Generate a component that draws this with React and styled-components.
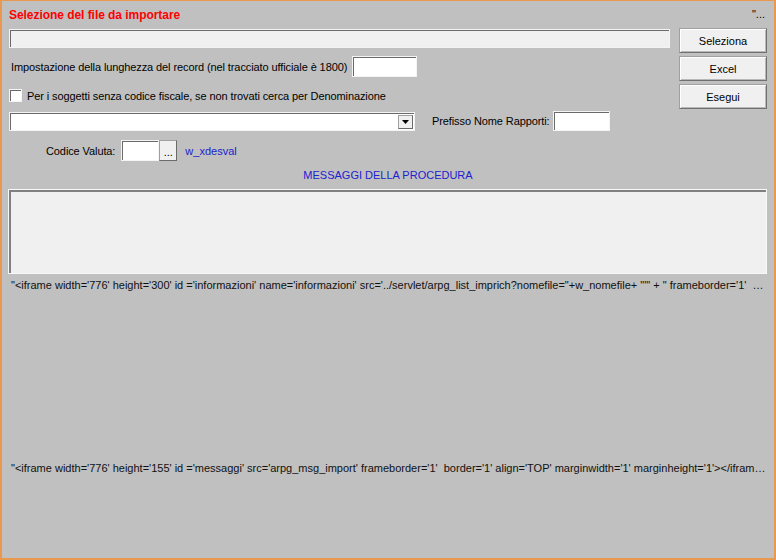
import styled, { createGlobalStyle } from 'styled-components';

const GlobalStyle = createGlobalStyle`
  html, body {
    margin: 0;
    padding: 0;
    background: #c0c0c0;
  }
  * {
    box-sizing: border-box;
  }
`

const Frame = styled.div`
  width: 776px;
  height: 560px;
  background: #c0c0c0;
  border: 2px solid #e8984f;
  border-top-width: 1px;
  padding: 0 7px 0 7px;
  display: flex;
  flex-direction: column;
  font-family: "Liberation Sans", Arial, sans-serif;
  font-size: 11px;
  color: #000;
  overflow: hidden;
`

const Header = styled.div`
  display: flex;
  justify-content: space-between;
  align-items: center;
  height: 28px;
  padding-top: 0;
`

const Title = styled.div`
  color: #ff0000;
  font-weight: bold;
  font-size: 12px;
  letter-spacing: -0.05px;
`

const Corner = styled.div`
  font-size: 11px;
  margin-right: 2px;
  margin-top: -3px;
`

const Top = styled.div`
  display: flex;
  gap: 9px;
`

const LeftCol = styled.div`
  flex: 1;
  display: flex;
  flex-direction: column;
`

const RightCol = styled.div`
  width: 88px;
  display: flex;
  flex-direction: column;
  gap: 3px;
  margin-top: -1px;
`

const Button = styled.button`
  height: 25px;
  width: 100%;
  background: #f0f0f0;
  border: 1px solid #707070;
  border-top-color: #a0a0a0;
  border-left-color: #a0a0a0;
  box-shadow: inset 1px 1px 0 #ffffff, inset -1px -1px 0 #b8b8b8;
  font-family: inherit;
  font-size: 11px;
  color: #000;
  padding: 0;
`

const Field = styled.div`
  height: ${p => p.$h || 19}px;
  width: ${p => (p.$w ? p.$w + 'px' : '100%')};
  margin-left: ${p => p.$ml || 0}px;
  background: ${p => p.$bg || '#ffffff'};
  border: 1px solid #f4f4f4;
  box-shadow: inset 1px 1px 0 #6a6a6a;
  flex-shrink: 0;
`

const Row = styled.div`
  display: flex;
  align-items: center;
  gap: ${p => p.$gap ?? 4}px;
  margin-top: ${p => p.$mt || 0}px;
  padding-left: ${p => p.$pl || 0}px;
`

const Label = styled.span`
  white-space: nowrap;
  letter-spacing: -0.1px;
`

const Check = styled.div`
  width: 13px;
  height: 13px;
  background: #fff;
  border: 1px solid #f4f4f4;
  box-shadow: inset 1px 1px 0 #6a6a6a;
  flex-shrink: 0;
`

const Select = styled.div`
  width: 406px;
  height: 19px;
  background: #fff;
  border: 1px solid #f4f4f4;
  box-shadow: inset 1px 1px 0 #6a6a6a;
  display: flex;
  justify-content: flex-end;
  padding: 2px 1px 1px 2px;
`

const Arrow = styled.div`
  width: 15px;
  height: 100%;
  background: #f0f0f0;
  border: 1px solid #a0a0a0;
  border-right-color: #6a6a6a;
  border-bottom-color: #6a6a6a;
  display: flex;
  align-items: center;
  justify-content: center;
`

const SmallButton = styled.div`
  width: 18px;
  height: 21px;
  background: #f0f0f0;
  border: 1px solid #a0a0a0;
  border-right-color: #6a6a6a;
  border-bottom-color: #6a6a6a;
  display: flex;
  align-items: flex-end;
  justify-content: center;
  padding-bottom: 4px;
  font-size: 11px;
  line-height: 8px;
`

const BlueText = styled.span`
  color: #2020d0;
  white-space: nowrap;
  margin-left: ${p => p.$ml || 0}px;
`

const Centered = styled.div`
  text-align: center;
  color: #2020d0;
  margin-top: 8px;
  height: 14px;
`

const MessageBox = styled.div`
  margin: 6px 0 0 -1px;
  height: 85px;
  background: #f0f0f0;
  border: 1px solid #f8f8f8;
  box-shadow: inset 2px 2px 0 #808080;
`

const Code = styled.div`
  margin-top: ${p => p.$mt}px;
  padding-left: 2px;
  white-space: pre;
  overflow: hidden;
  text-overflow: ellipsis;
  color: #111;
  font-size: 11px;
  letter-spacing: 0px;
`

export default function App() {
  return (
    <>
      <GlobalStyle />
      <Frame>
        <Header>
          <Title>Selezione del file da importare</Title>
          <Corner>"...</Corner>
        </Header>
        <Top>
          <LeftCol>
            <Field $h={19} $bg="#f0f0f0" />
            <Row $mt={8} $gap={5} $pl={2}>
              <Label>Impostazione della lunghezza del record (nel tracciato ufficiale è 1800)</Label>
              <Field $w={65} $h={21} />
            </Row>
            <Row $mt={12} $gap={5}>
              <Check />
              <Label>Per i soggetti senza codice fiscale, se non trovati cerca per Denominazione</Label>
            </Row>
          </LeftCol>
          <RightCol>
            <Button>Seleziona</Button>
            <Button>Excel</Button>
            <Button>Esegui</Button>
          </RightCol>
        </Top>
        <Row $mt={2} $gap={17}>
          <Select>
            <Arrow>
              <svg width="7" height="4" viewBox="0 0 7 4">
                <path d="M0 0h7L3.5 4z" fill="#000" />
              </svg>
            </Arrow>
          </Select>
          <Row $gap={3}>
            <Label>Prefisso Nome Rapporti:</Label>
            <Field $w={57} $h={20} />
          </Row>
        </Row>
        <Row $mt={9} $pl={37} $gap={0}>
          <Label>Codice Valuta:</Label>
          <Field $w={38} $h={21} $ml={6} />
          <SmallButton>...</SmallButton>
          <BlueText $ml={8}>w_xdesval</BlueText>
        </Row>
        <Centered>MESSAGGI DELLA PROCEDURA</Centered>
        <MessageBox />
        <Code $mt={5}>
          {`"<iframe width='776' height='300' id ='informazioni' name='informazioni' src='../servlet/arpg_list_imprich?nomefile="+w_nomefile+ "'" + " frameborder='1'  border='1' align='TOP' marginwidth='1' marginheight='1'></iframe>"`}
        </Code>
        <Code $mt={171}>
          {`"<iframe width='776' height='155' id ='messaggi' src='arpg_msg_import' frameborder='1'  border='1' align='TOP' marginwidth='1' marginheight='1'></iframe>"`}
        </Code>
      </Frame>
    </>
  );
}
